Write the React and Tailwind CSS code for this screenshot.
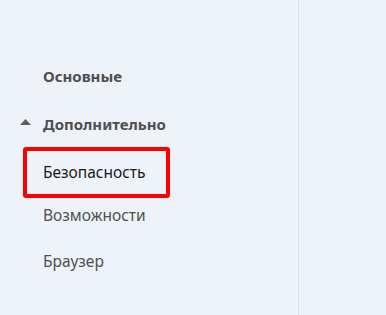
export default function App() {
    return (
        <div className="flex h-[315px] w-[386px] bg-[#eef2f9]" style={{ fontFamily: '"Noto Sans", "Open Sans", sans-serif' }}>
            {/* Sidebar */}
            <nav className="flex w-[299px] flex-col border-r border-[#dde2e8] pt-[52px]">
                <div className="flex h-12 items-center pl-[43px] text-[15px] font-bold text-[#4f4f4f]">
                    Основные
                </div>

                <div className="flex h-12 items-center text-[15px] font-bold text-[#4f4f4f]">
                    <svg className="mb-[4px] ml-[20px] mr-[12px]" width="11" height="6" viewBox="0 0 11 6">
                        <polygon points="0,6 11,6 5.5,0" fill="#5f5f5f" />
                    </svg>
                    Дополнительно
                </div>

                {/* Selected item, outlined in red */}
                <div className="-mt-px ml-[23px] flex h-[51px] w-[147px] items-center rounded-[3px] border-4 border-[#ff0000] pl-[16px] text-[15.5px] text-[#1b1b1b]">
                    Безопасность
                </div>

                <div className="flex h-9 items-center pl-[43px] text-[15.5px] text-[#505050]">
                    Возможности
                </div>

                <div className="mt-[10px] flex h-9 items-center pl-[43px] text-[15.5px] text-[#505050]">
                    Браузер
                </div>
            </nav>

            <main className="flex-1" />
        </div>
    );
}
